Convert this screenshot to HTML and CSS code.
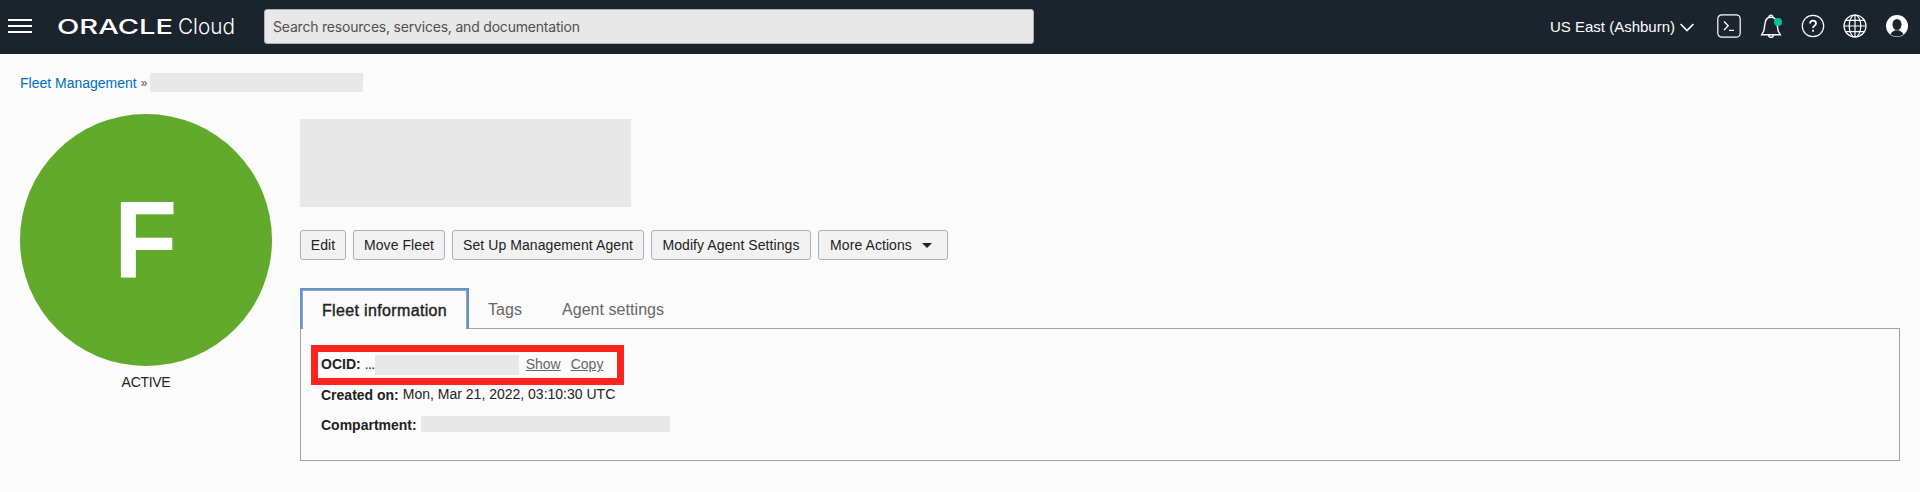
FILE: index.html
```html
<!DOCTYPE html>
<html lang="en">
<head>
<meta charset="utf-8">
<title>Fleet Management</title>
<link rel="stylesheet" href="styles.css">
</head>
<body>
<header class="topbar">
  <svg class="menu" width="24" height="14" viewBox="0 0 24 14" fill="#fff"><path d="M0 0h24v2H0zM0 6h24v2H0zM0 12h24v2H0z"/></svg>
  <svg class="logo" width="186" height="32" viewBox="0 0 186 32" fill="#fff">
    <text class="logo-oracle" x="-1" y="23" textLength="116" lengthAdjust="spacingAndGlyphs">ORACLE</text>
    <text class="logo-cloud" x="120" y="23" textLength="57" lengthAdjust="spacingAndGlyphs">Cloud</text>
  </svg>
  <div class="search">Search resources, services, and documentation</div>
  <div class="region">US East (Ashburn)
    <svg width="14" height="9" viewBox="0 0 14 9" fill="none" stroke="#fff" stroke-width="1.6"><path d="M.6 1 7 7.6 13.4 1"/></svg>
  </div>
  <div class="icons">
    <svg width="24" height="24" viewBox="0 0 24 24" fill="none" stroke="#fff"><rect x=".8" y=".8" width="22.4" height="22.4" rx="4" stroke-width="1.2"/><path d="M7 7.5l4.2 4.3L7 16M12 16.3h5" stroke-width="1.3"/></svg>
    <svg width="24" height="24" viewBox="0 0 24 24" fill="none" stroke="#fff" stroke-width="1.4"><path d="M10 3a1.9 1.9 0 0 1 3.8 0M2.7 20.7h18.6L19.2 17 17.7 8.5C17.2 5 15 3.2 11.9 3.2S6.7 5 6.2 8.5L4.8 17zM9.6 21a2.4 2.4 0 0 0 4.8 0"/><circle cx="19" cy="8" r="4" fill="#00c29f" stroke="none"/></svg>
    <svg width="24" height="24" viewBox="0 0 24 24" fill="none" stroke="#fff"><circle cx="12" cy="12" r="10.7" stroke-width="1.2"/><path d="M9 9.5C9 7.7 10.2 6.7 12 6.7s3 1.100 3 2.7c0 2.100-3 2.300-3 4.600M12 15.7v2" stroke-width="1.7"/></svg>
    <svg width="24" height="24" viewBox="0 0 24 24" fill="none" stroke="#fff" stroke-width="1.2"><circle cx="12" cy="12" r="11"/><ellipse cx="12" cy="12" rx="5.8" ry="11"/><path d="M12 1v22M1 12h22M2.8 6.300h18.400M2.8 17.700h18.400"/></svg>
    <svg width="24" height="24" viewBox="0 0 24 24"><circle cx="12" cy="12" r="11" fill="#fff"/><path d="M5.500 20.400C6.500 17.500 9 17.200 10 16.200h4c1 1 3.500 1.300 4.500 4.200a11 11 0 0 1-13 0z" fill="#1b242d"/><ellipse cx="12" cy="10.500" rx="4.500" ry="5.600" fill="#1b242d"/></svg>
  </div>
</header>
<nav class="crumbs"><a class="crumb-link">Fleet Management</a><span class="sep">»</span><span class="redacted crumb-name"></span></nav>
<main class="page">
  <aside class="status"><div class="badge"><span class="initial">F</span></div><div class="state">ACTIVE</div></aside>
  <section class="detail">
    <div class="redacted title"></div>
    <div class="actions">
      <button class="btn edit">Edit</button>
      <button class="btn move">Move Fleet</button>
      <button class="btn setup">Set Up Management Agent</button>
      <button class="btn modify">Modify Agent Settings</button>
      <button class="btn more">More Actions<svg width="10" height="5" viewBox="0 0 10 5"><path d="M0 0h10L5 5z" fill="#222"/></svg></button>
    </div>
    <div class="tabs">
      <div class="tab active">Fleet information</div>
      <div class="tab tags">Tags</div>
      <div class="tab">Agent settings</div>
    </div>
    <div class="panel">
      <div class="row"><b>OCID:</b><span class="dots">...</span><span class="redacted ocid"></span><a class="link show">Show</a><a class="link">Copy</a></div>
      <div class="row created"><b>Created on:</b><span class="date">Mon, Mar 21, 2022, 03:10:30 UTC</span></div>
      <div class="row"><b>Compartment:</b><span class="redacted compartment"></span></div>
      <div class="highlight"></div>
    </div>
  </section>
</main>
</body>
</html>
```
FILE: styles.css
```css
* { box-sizing: border-box; }
body { margin: 0; height: 492px; overflow: hidden; background: #fbfbfb; color: #222; font: 14px/20px "Liberation Sans", Arial, sans-serif; }
svg { display: block; flex: none; }
.topbar { display: flex; align-items: center; height: 54px; padding: 0 11px 0 8px; background: #1b242d; color: #fff; }
.menu { margin-top: -2px; }
.logo { margin-left: 26px; overflow: visible; }
.logo-oracle { font: 500 20.5px Inter, sans-serif; }
.logo-cloud { font: 300 22px Inter, sans-serif; }
.search { width: 770px; height: 35px; margin: -1px 0 0 20px; padding-left: 8px; border: 1px solid #a9b0bb; border-radius: 3px; background: #e8e8e8; color: #505050; font: 14px/34px Inter, sans-serif; letter-spacing: -0.2px; }
.region { display: flex; align-items: center; gap: 5px; margin-left: auto; font-size: 15px; }
.icons { display: flex; gap: 18px; margin-left: 23px; margin-top: -2px; }
.redacted { background: #e8e8e8; flex: none; }
.crumbs { display: flex; align-items: center; height: 60px; padding: 0 0 3px 20px; }
.crumb-link { color: #006dc1; }
.sep { width: 13px; padding-left: 4px; color: #555; font-size: 12px; }
.crumb-name { width: 213px; height: 19px; margin-top: -1px; }
.page { display: flex; padding: 0 20px; }
.status { width: 252px; text-align: center; }
.badge { width: 252px; height: 252px; border-radius: 50%; background: #62aa2b; color: #fff; font-size: 110px; font-weight: bold; line-height: 251px; }
.initial { display: inline-block; transform: scaleX(0.94); }
.state { margin-top: 6px; letter-spacing: -0.3px; }
.detail { flex: 1; padding: 5px 0 0 28px; }
.title { width: 331px; height: 88px; }
.actions { display: flex; gap: 7px; margin-top: 23px; }
.btn { display: flex; align-items: center; justify-content: center; height: 30px; padding: 0; border: 1px solid #a9b0bb; border-radius: 3px; background: #f2f2f2; color: #222; font: inherit; letter-spacing: 0.08px; white-space: nowrap; }
.edit { width: 46px; }
.move { width: 92px; }
.setup { width: 192px; }
.modify { width: 160px; }
.more { width: 130px; gap: 10px; padding-right: 4px; }
.tabs { display: flex; height: 41px; margin-top: 28px; position: relative; z-index: 1; }
.tab { padding: 12px 20px 0 19px; color: #666; font-size: 16px; letter-spacing: 0.05px; }
.tags { padding-right: 21px; }
.active { width: 169px; border: 2px solid #5b96d5; border-bottom: 0; background: #fbfbfb; box-shadow: inset 1px 1px #a0a0a0, inset -1px 0 #a0a0a0; color: #222; letter-spacing: 0.35px; -webkit-text-stroke: 0.4px #222; padding: 11px 0 0 20px; }
.panel { position: relative; height: 133px; margin-top: -1px; padding: 20px 0 0 20px; border: 1px solid #a0a0a0; }
.row { display: flex; align-items: center; height: 30px; }
.created { margin-top: 1px; }
.dots { width: 10px; margin-left: 4px; letter-spacing: -0.6px; }
.ocid { width: 144px; height: 20px; margin-top: 2px; }
.link { margin-left: 10px; color: #666; text-decoration: underline; }
.show { margin-left: 7px; }
.date { margin-left: 4px; margin-top: -2px; }
.compartment { width: 249px; height: 16px; margin-left: 4px; margin-top: -2px; }
.highlight { position: absolute; left: 10px; top: 16px; width: 313px; height: 40px; border: 7px solid #fd241d; }
```
